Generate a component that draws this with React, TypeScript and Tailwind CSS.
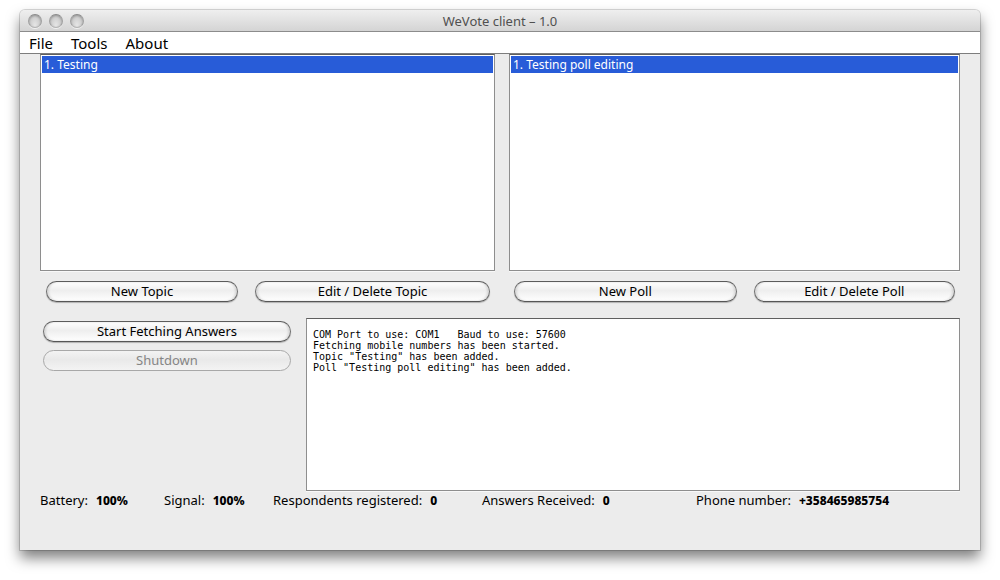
import { useState } from "react";
import type { ReactNode } from "react";

const menus = ["File", "Tools", "About"];

const logText = [
  "COM Port to use: COM1   Baud to use: 57600",
  "Fetching mobile numbers has been started.",
  'Topic "Testing" has been added.',
  'Poll "Testing poll editing" has been added.',
].join("\n");

const stats = [
  { label: "Battery:", value: "100%" },
  { label: "Signal:", value: "100%" },
  { label: "Respondents registered:", value: "0" },
  { label: "Answers Received:", value: "0" },
  { label: "Phone number:", value: "+358465985754" },
];

function AquaButton({ children, disabled = false }: { children: ReactNode; disabled?: boolean }) {
  return (
    <button
      type="button"
      disabled={disabled}
      className="flex h-[21px] w-full items-center justify-center rounded-full border border-[#6e6e6e] border-t-[#5c5c5c] border-b-[#565656] bg-linear-to-b from-white from-0% via-[#eeeeee] via-45% to-white to-100% pb-0.5 text-[13px] leading-4 whitespace-nowrap text-black shadow-[0_1px_1px_rgba(0,0,0,0.25),inset_2px_0_2px_rgba(0,0,0,0.1),inset_-2px_0_2px_rgba(0,0,0,0.1)] disabled:border-[#a8a8a8] disabled:from-[#f3f3f3] disabled:via-[#e9e9e9] disabled:to-[#f3f3f3] disabled:text-[#858585] disabled:shadow-none"
    >
      {children}
    </button>
  );
}

function ListBox({ label, items }: { label: string; items: string[] }) {
  const [selected, setSelected] = useState(0);
  return (
    <ul
      role="listbox"
      aria-label={label}
      className="h-[217px] overflow-y-auto border border-[#8e8e8e] border-t-[#5f5f5f] bg-white p-px shadow-[0_1px_0_#f8f8f8]"
    >
      {items.map((item, i) => (
        <li
          key={item}
          role="option"
          aria-selected={i === selected}
          onClick={() => setSelected(i)}
          className="h-[17px] cursor-default px-0.5 text-[12px] leading-[17px] aria-selected:bg-[#285cd8] aria-selected:text-white"
        >
          {item}
        </li>
      ))}
    </ul>
  );
}

function WindowButton({ label }: { label: string }) {
  return (
    <button
      type="button"
      aria-label={label}
      className="size-[14px] rounded-full border border-[#a0a0a0] border-t-[#8a8a8a] border-b-[#b4b4b4] bg-radial-[at_50%_85%] from-[#e6e6e6] to-[#bcbcbc] shadow-[0_1px_0_#f0f0f0,inset_0_1px_2px_rgba(0,0,0,0.25)]"
    />
  );
}

export default function App() {
  return (
    <div className="flex min-h-screen flex-col bg-white px-5 pt-2.5 pb-[30px] font-['Noto_Sans','Open_Sans',sans-serif] text-black">
      <div className="flex flex-1 flex-col rounded-t-[5px] bg-[#ececec] shadow-[0_0_0_1px_rgba(0,0,0,0.15),0_8px_14px_rgba(0,0,0,0.5)]">
        <header className="grid h-[22px] grid-cols-[1fr_auto_1fr] items-center rounded-t-[5px] border-b border-[#8c8c8c] bg-linear-to-b from-[#efefef] to-[#d4d4d4] px-2">
          <div className="flex gap-[7px]">
            <WindowButton label="Close" />
            <WindowButton label="Minimize" />
            <WindowButton label="Zoom" />
          </div>
          <h1 className="text-[13px] leading-5 text-[#505050]">WeVote client – 1.0</h1>
        </header>

        <nav aria-label="Main menu" className="flex h-[22px] items-center gap-[18px] border-b border-[#7d7d7d] bg-white px-[9px]">
          {menus.map((menu) => (
            <button key={menu} type="button" className="text-[15px] leading-5">
              {menu}
            </button>
          ))}
        </nav>

        <main className="px-5">
          <div className="grid grid-cols-[455fr_451fr] gap-x-[14px]">
            <section>
              <ListBox label="Topics" items={["1. Testing"]} />
              <div className="mt-2.5 grid grid-cols-[192fr_235fr] gap-[17px] pr-[5px] pl-1.5">
                <AquaButton>New Topic</AquaButton>
                <AquaButton>Edit / Delete Topic</AquaButton>
              </div>
            </section>
            <section>
              <ListBox label="Polls" items={["1. Testing poll editing"]} />
              <div className="mt-2.5 grid grid-cols-[222fr_201fr] gap-[17px] px-[5px]">
                <AquaButton>New Poll</AquaButton>
                <AquaButton>Edit / Delete Poll</AquaButton>
              </div>
            </section>
          </div>

          <div className="mt-4 grid grid-cols-[252fr_654fr] gap-x-[14px]">
            <div className="flex flex-col gap-2 pt-[3px] pr-px pl-[3px]">
              <AquaButton>Start Fetching Answers</AquaButton>
              <AquaButton disabled>Shutdown</AquaButton>
            </div>
            <textarea
              readOnly
              aria-label="Log"
              value={logText}
              className="block h-[173px] w-full resize-none border border-[#8e8e8e] border-t-[#5f5f5f] bg-white px-1.5 py-2.5 font-['DejaVu_Sans_Mono',monospace] text-[10px] leading-[11px] shadow-[0_1px_0_#f8f8f8] outline-none"
            />
          </div>

          <dl className="grid grid-cols-[124fr_109fr_209fr_214fr_264fr]">
            {stats.map(({ label, value }) => (
              <div key={label} className="flex items-baseline gap-2 leading-[18px] whitespace-nowrap">
                <dt className="text-[13px]">{label}</dt>
                <dd className="text-[12px] font-extrabold">{value}</dd>
              </div>
            ))}
          </dl>
        </main>
      </div>
    </div>
  );
}
